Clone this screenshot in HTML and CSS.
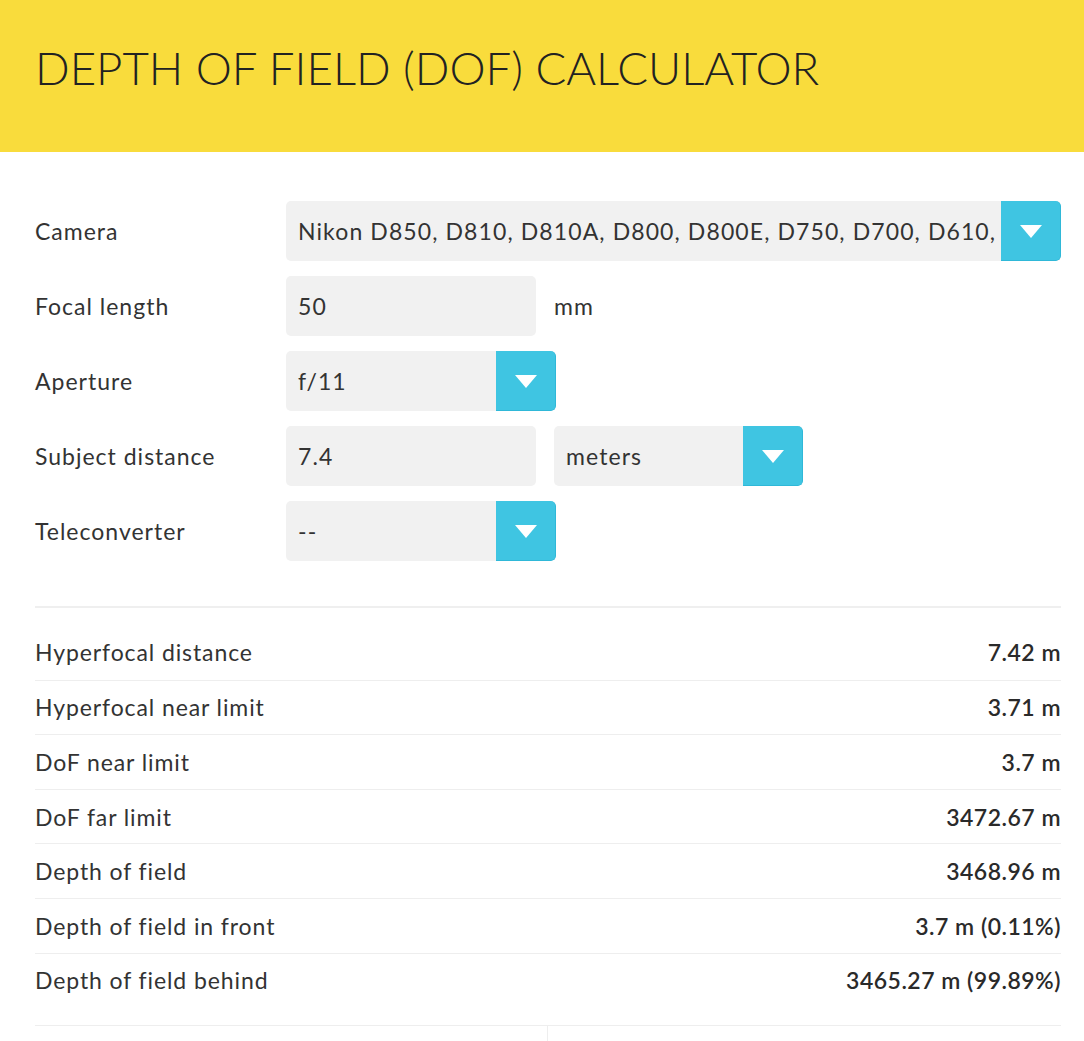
FILE: index.html
```html
<!DOCTYPE html>
<html lang="en">
<head>
<meta charset="utf-8">
<title>Depth of Field (DoF) Calculator</title>
<link rel="stylesheet" href="styles.css">
</head>
<body>
<header class="hero">
  <h1 class="hero-title">DEPTH OF FIELD (DOF) CALCULATOR</h1>
</header>
<main class="content">
  <form class="calc-form">
    <div class="form-row">
      <label class="form-label">Camera</label>
      <div class="select select-wide">
        <span class="select-value">Nikon D850, D810, D810A, D800, D800E, D750, D700, D610, D600, D3x</span>
        <span class="select-btn"><span class="caret"></span></span>
      </div>
    </div>
    <div class="form-row">
      <label class="form-label">Focal length</label>
      <div class="field-group">
        <div class="input"><span class="input-value">50</span></div>
        <span class="unit">mm</span>
      </div>
    </div>
    <div class="form-row">
      <label class="form-label">Aperture</label>
      <div class="select select-mid">
        <span class="select-value">f/11</span>
        <span class="select-btn"><span class="caret"></span></span>
      </div>
    </div>
    <div class="form-row">
      <label class="form-label">Subject distance</label>
      <div class="field-group">
        <div class="input"><span class="input-value">7.4</span></div>
        <div class="select select-unit">
          <span class="select-value">meters</span>
          <span class="select-btn"><span class="caret"></span></span>
        </div>
      </div>
    </div>
    <div class="form-row">
      <label class="form-label">Teleconverter</label>
      <div class="select select-mid">
        <span class="select-value">--</span>
        <span class="select-btn"><span class="caret"></span></span>
      </div>
    </div>
  </form>

  <section class="results">
    <div class="result-row"><span class="result-label">Hyperfocal distance</span><span class="result-value">7.42 m</span></div>
    <div class="result-row"><span class="result-label">Hyperfocal near limit</span><span class="result-value">3.71 m</span></div>
    <div class="result-row"><span class="result-label">DoF near limit</span><span class="result-value">3.7 m</span></div>
    <div class="result-row"><span class="result-label">DoF far limit</span><span class="result-value">3472.67 m</span></div>
    <div class="result-row"><span class="result-label">Depth of field</span><span class="result-value">3468.96 m</span></div>
    <div class="result-row"><span class="result-label">Depth of field in front</span><span class="result-value">3.7 m (0.11%)</span></div>
    <div class="result-row"><span class="result-label">Depth of field behind</span><span class="result-value">3465.27 m (99.89%)</span></div>
  </section>

  <div class="split">
    <div class="split-col split-left"></div>
    <div class="split-col"></div>
  </div>
</main>
</body>
</html>
```

FILE: styles.css
```css
html, body {
  margin: 0;
  padding: 0;
  background: #ffffff;
}

body {
  font-family: Lato, "Open Sans", "Liberation Sans", sans-serif;
  color: #333333;
}

.hero {
  background: #f9dc3c;
  height: 152px;
  box-sizing: border-box;
  padding: 0 0 18px 35px;
  display: flex;
  align-items: center;
}

.hero-title {
  margin: 0;
  font-size: 45.6px;
  font-weight: 300;
  color: #222222;
  letter-spacing: 0;
}

.content {
  padding: 49px 23px 0 35px;
}

.calc-form {
  display: flex;
  flex-direction: column;
  gap: 15px;
}

.form-row {
  display: grid;
  grid-template-columns: 251px 1fr;
  align-items: center;
  height: 60px;
}

.form-label {
  font-size: 23px;
  letter-spacing: 1px;
  color: #333333;
}

.field-group {
  display: flex;
  align-items: center;
  gap: 18px;
}

.input,
.select {
  height: 60px;
  box-sizing: border-box;
  background: #f1f1f1;
  border-radius: 5px;
  display: flex;
  align-items: center;
  font-size: 23px;
  letter-spacing: 1.1px;
  color: #333333;
}

.input {
  width: 250px;
  padding-left: 12px;
}

.select {
  overflow: hidden;
}

.select-wide { width: 100%; }
.select-mid { width: 270px; }
.select-unit { width: 249px; }

.select-value {
  flex: 1;
  min-width: 0;
  padding-left: 12px;
  white-space: nowrap;
  overflow: hidden;
}

.select-btn {
  flex: none;
  width: 60px;
  height: 60px;
  box-sizing: border-box;
  background: #3fc5e2;
  border-right: 1px solid #2fb8d8;
  border-bottom: 1px solid #2fb8d8;
  border-radius: 0 5px 5px 0;
  display: flex;
  align-items: center;
  justify-content: center;
}

.caret {
  width: 0;
  height: 0;
  border-left: 11px solid transparent;
  border-right: 11px solid transparent;
  border-top: 13px solid #ffffff;
  margin-top: 2px;
}

.unit {
  font-size: 23px;
  letter-spacing: 1.1px;
  color: #333333;
}

.results {
  margin-top: 45px;
  border-top: 2px solid #efefef;
  padding: 17px 0 18px;
}

.result-row {
  height: 54.6px;
  box-sizing: border-box;
  display: flex;
  align-items: center;
  justify-content: space-between;
  font-size: 23px;
}

.result-row + .result-row {
  border-top: 1px solid #eeeeee;
}

.result-label {
  letter-spacing: 0.9px;
}

.result-value {
  font-weight: 600;
  letter-spacing: 0.5px;
  color: #2a2a2a;
}

.split {
  display: grid;
  grid-template-columns: 1fr 1fr;
  border-top: 1px solid #eeeeee;
  height: 30px;
}

.split-left {
  border-right: 1px solid #eeeeee;
}
```
